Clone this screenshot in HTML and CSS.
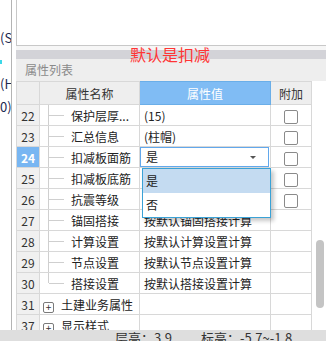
FILE: index.html
```html
<!DOCTYPE html>
<html lang="zh">
<head>
	<meta charset="UTF-8">
	<title>属性列表</title>
	<link rel="stylesheet" href="styles.css">
</head>
<body>
	<div class="screen">
		<div class="work">
			<div class="side"> <!-- левая панель, текст обрезан -->
				<div class="side-line">(S)</div>
				<div class="side-line"><span class="mark"></span></div>
				<div class="side-line">(H)</div>
				<div class="side-line">0)</div>
			</div>
			<div class="gutter"></div>
			<div class="main">
				<div class="view"></div>
				<div class="split"></div>
				<div class="grip"><span class="note">默认是扣减</span></div>
				<div class="caption">属性列表</div>
				<div class="grid-wrap">
					<table class="props">
						<colgroup>
							<col class="c-num">
							<col class="c-name">
							<col class="c-value">
							<col class="c-add">
						</colgroup>
						<tr class="head">
							<th></th>
							<th>属性名称</th>
							<th class="head-value">属性值</th>
							<th>附加</th>
						</tr>
						<tr>
							<td class="num">22</td>
							<td class="name child">保护层厚...</td>
							<td class="value">(15)</td>
							<td class="add"><span class="check"></span></td>
						</tr>
						<tr>
							<td class="num">23</td>
							<td class="name child">汇总信息</td>
							<td class="value">(柱帽)</td>
							<td class="add"><span class="check"></span></td>
						</tr>
						<tr>
							<td class="num num-active">24</td>
							<td class="name child">扣减板面筋</td>
							<td class="value value-edit">
								<div class="combo">
									<span>是</span>
									<span class="arrow"></span>
									<ul class="drop"> <!-- раскрытый список -->
										<li class="drop-item drop-item-on">是</li>
										<li class="drop-item">否</li>
									</ul>
								</div>
							</td>
							<td class="add"><span class="check"></span></td>
						</tr>
						<tr>
							<td class="num">25</td>
							<td class="name child">扣减板底筋</td>
							<td class="value"></td>
							<td class="add"><span class="check"></span></td>
						</tr>
						<tr>
							<td class="num">26</td>
							<td class="name child">抗震等级</td>
							<td class="value"></td>
							<td class="add"><span class="check"></span></td>
						</tr>
						<tr>
							<td class="num">27</td>
							<td class="name child">锚固搭接</td>
							<td class="value">按默认锚固搭接计算</td>
							<td class="add"></td>
						</tr>
						<tr>
							<td class="num">28</td>
							<td class="name child">计算设置</td>
							<td class="value">按默认计算设置计算</td>
							<td class="add"></td>
						</tr>
						<tr>
							<td class="num">29</td>
							<td class="name child">节点设置</td>
							<td class="value">按默认节点设置计算</td>
							<td class="add"></td>
						</tr>
						<tr>
							<td class="num">30</td>
							<td class="name child child-last">搭接设置</td>
							<td class="value">按默认搭接设置计算</td>
							<td class="add"></td>
						</tr>
						<tr>
							<td class="num">31</td>
							<td class="name group"><span class="plus">+</span>土建业务属性</td>
							<td class="value"></td>
							<td class="add"></td>
						</tr>
						<tr>
							<td class="num">37</td>
							<td class="name group"><span class="plus">+</span>显示样式</td>
							<td class="value"></td>
							<td class="add"></td>
						</tr>
					</table>
					<div class="scroll"><div class="thumb"></div></div>
				</div>
			</div>
		</div>
		<div class="status">
			<span class="status-item">层高：3.9</span>
			<span>标高：-5.7~-1.8</span>
		</div>
	</div>
</body>
</html>
```

FILE: styles.css
```css
* {
	box-sizing: border-box;
}

body {
	margin: 0;
	font-family: "Noto Sans CJK SC", "Noto Sans", sans-serif;
	font-size: 12px;
	color: #222;
	background: #fff;
}

.screen {
	width: 326px;
	height: 341px;
	overflow: hidden;
	display: flex;
	flex-direction: column;
}

.work {
	height: 330px;
	display: flex;
	overflow: hidden;
}

/* левая панель */
.side {
	width: 12px;
	flex-shrink: 0;
	border-right: 1px solid #b4b4b4;
	padding-top: 26px;
	overflow: hidden;
}

.side-line {
	height: 23px;
	line-height: 23px;
	font-size: 13px;
	color: #1c2850;
	white-space: nowrap;
}

.mark {
	display: inline-block;
	width: 2px;
	height: 4px;
	background: #3cd8e8;
	vertical-align: middle;
}

.gutter {
	width: 4px;
	flex-shrink: 0;
}

.main {
	flex: 1;
	display: flex;
	flex-direction: column;
	min-width: 0;
}

.view {
	height: 46px;
	flex-shrink: 0;
	border-left: 1px solid #c8c8c8;
	border-bottom: 1px solid #c8c8c8;
}

.split {
	height: 4px;
	flex-shrink: 0;
	background: #f6f6f6;
}

.grip {
	position: relative;
	height: 9px;
	flex-shrink: 0;
	background: #d3d3d8;
}

.note { /* красная подпись поверх полосы */
	position: absolute;
	left: 114px;
	top: -4px;
	font-size: 16px;
	line-height: 16px;
	color: #ff3434;
	white-space: nowrap;
}

.caption {
	height: 22px;
	flex-shrink: 0;
	background: #eeeeee;
	padding-left: 9px;
	line-height: 21px;
	color: #8a8a8a;
}

.grid-wrap {
	flex: 1;
	display: flex;
	overflow: hidden;
	background: #fff;
}

/* таблица свойств */
.props {
	width: 295px;
	flex-shrink: 0;
	table-layout: fixed;
	border-collapse: collapse;
	align-self: flex-start;
}

.c-num { width: 23px; }
.c-name { width: 100px; }
.c-value { width: 131px; }
.c-add { width: 41px; }

.props th,
.props td {
	height: 21px;
	padding: 0;
	border: 1px solid #d8d8d8;
	white-space: nowrap;
	overflow: hidden;
	line-height: 19px;
}

.head th {
	height: 23px;
	background: #eeeeee;
	font-weight: normal;
	color: #333;
	text-align: center;
}

.head .head-value {
	background: #80bcf4;
	border-color: #6aaee8;
	color: #fff;
}

.num {
	background: #f0f0f0;
	text-align: center;
	color: #333;
}

.num-active {
	background: #78b6f2;
	color: #fff;
	font-weight: bold;
}

.name {
	position: relative;
	padding-left: 31px !important;
}

.child::before { /* вертикальная линия дерева */
	content: "";
	position: absolute;
	left: 8px;
	top: 0;
	bottom: 0;
	border-left: 1px solid #cfcfcf;
}

.child-last::before {
	bottom: 50%;
}

.child::after { /* горизонтальная линия дерева */
	content: "";
	position: absolute;
	left: 9px;
	width: 15px;
	top: 50%;
	border-top: 1px solid #cfcfcf;
}

.group {
	padding-left: 3px !important;
}

.plus {
	display: inline-block;
	width: 11px;
	height: 11px;
	margin-right: 7px;
	border: 1px solid #7a7a7a;
	border-radius: 2px;
	font-size: 10px;
	line-height: 8px;
	text-align: center;
	vertical-align: -1px;
	color: #333;
}

.value {
	padding-left: 4px !important;
}

.value-edit {
	padding-left: 0 !important;
	overflow: visible !important;
}

.combo {
	position: relative;
	height: 20px;
	margin-right: 1px;
	border: 1px solid #62a8ec;
	padding-left: 5px;
	line-height: 18px;
	background: #fff;
}

.arrow {
	position: absolute;
	right: 12px;
	top: 8px;
	border-left: 3px solid transparent;
	border-right: 3px solid transparent;
	border-top: 3px solid #555;
}

.drop {
	position: absolute;
	z-index: 2;
	left: 1px;
	top: 20px;
	width: 129px;
	margin: 0;
	padding: 0;
	list-style: none;
	background: #fff;
	border: 1px solid #3aa2d6;
	box-shadow: 3px 3px 4px rgba(0, 0, 0, .22);
}

.drop-item {
	height: 24px;
	line-height: 23px;
	padding-left: 3px;
}

.drop-item-on {
	background: #c4dbf1;
}

.add {
	text-align: center;
}

.check {
	display: inline-block;
	width: 14px;
	height: 14px;
	border: 1px solid #8a8a8a;
	border-radius: 2px;
	vertical-align: -3px;
	background: #fff;
}

/* полоса прокрутки */
.scroll {
	flex: 1;
	padding-top: 159px;
	padding-left: 4px;
}

.thumb {
	width: 8px;
	height: 68px;
	border-radius: 4px;
	background: #c4c4c4;
}

/* строка состояния */
.status {
	height: 11px;
	flex-shrink: 0;
	overflow: hidden;
	background: #dedede;
	padding-left: 115px;
	padding-top: 1px;
	font-size: 13px;
	line-height: 13px;
	color: #333;
	white-space: nowrap;
}

.status-item {
	display: inline-block;
	width: 83px;
}
```
